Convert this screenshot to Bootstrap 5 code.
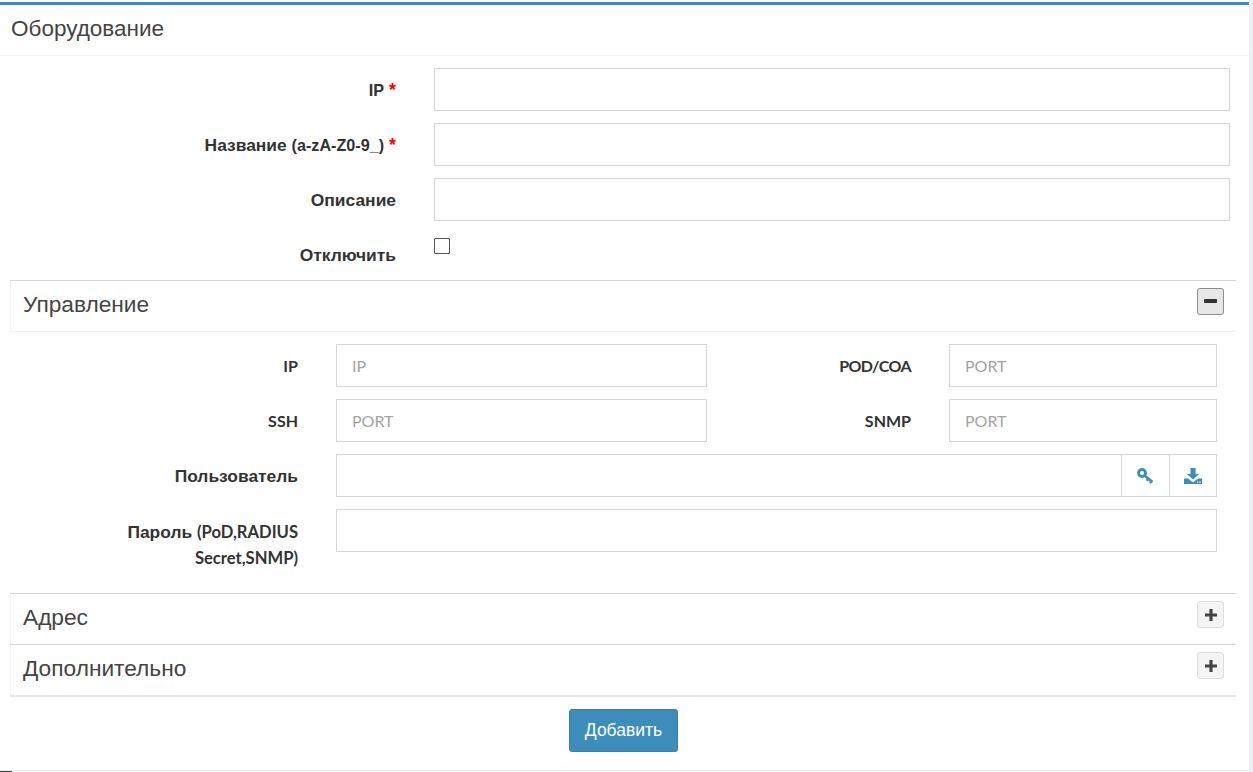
<!DOCTYPE html>
<html lang="ru"><head><meta charset="utf-8"><title>Оборудование</title>
<link href="https://cdn.jsdelivr.net/npm/bootstrap@5.3.0/dist/css/bootstrap.min.css" rel="stylesheet">
<style>
html,body{height:100%}
body{margin:0;background:#fff;font-family:"Liberation Sans",sans-serif;font-size:16px;color:#333;overflow:hidden}
.shell{width:1253px;height:772px;padding-top:2px;background:#fff;position:relative}
.pane{width:1249px;height:769px;background:#fff;border-top:3px solid #3c8dbc;border-bottom:1px solid #e4e6ea}
.strip{position:absolute;right:0;top:0;bottom:0;width:4px;background:#ecf0f5}
.foot-mark{position:absolute;left:0;bottom:0;width:12px;height:1px;background:#444}
.pane-head{height:51px;padding:0 11px;border-bottom:1px solid #f1f1f1;font:22.5px/47px "Liberation Sans",sans-serif;color:#444}
.pane-body{padding:12px 19px 0 11px}
.field{display:flex;margin-bottom:12px;min-height:43px}
.lab{flex:none;text-align:right;font-weight:700;font-size:17.4px;line-height:24px;padding-top:10px;color:#333;margin:0}
.lat{font-family:"Lato",sans-serif;font-size:16px}
.lat-big{font-family:"Lato",sans-serif;font-size:16.6px}
.lat-arial{font-size:16.2px}
.tight{letter-spacing:-.6px}
.outer-lab{width:385px;margin-right:38px}
.req{color:#f00;font-size:18px}
.inp{height:43px;border:1px solid #d2d6de;border-radius:0;font-family:"Lato",sans-serif;font-size:16px;padding:6px 15px;color:#555;box-shadow:none}
.inp::placeholder{color:#a3a3a3}
.chk{width:16px;height:16px;border:1px solid #555;border-radius:1px;margin:0;background:#fff;appearance:none;display:block}
.chk-wrap{padding-top:5px}
.sect{width:1226px;border-top:1px solid #d2d6de;margin-left:-1px}
.sect-head{height:50px;padding:0 12px 0 13px;font:22.7px/47px "Liberation Sans",sans-serif;color:#444;box-shadow:1px 0 0 #f4f4f4 inset}
.sect-open .sect-head{border-bottom:1px solid #f1f1f1;height:51px}
.tog{width:27px;height:27px;margin-top:7px;border:1px solid #ddd;border-radius:3px;background:#f4f4f4;padding:0;display:flex;align-items:center;justify-content:center}
.tog.on{background:#e7e7e7;border-color:#8c8c8c}
.sect-body{padding:12px 9px 22px 0}
.in-lab{width:288px;margin-right:38px}
.in-lab2{width:204px;margin-right:38px}
.half{width:371px;flex:none}
.half2{width:268px;flex:none}
.wide{width:881px;flex:none}
.inp-joined{border-right:0}
.addon{width:48px;flex:none;margin-left:0!important;border:1px solid #d2d6de;border-right:0;background:#fff;display:flex;align-items:center;justify-content:center}
.addon-end{border-right:1px solid #d2d6de}
.sect-last{border-bottom:2px solid #e4e6ea;height:53px}
.go{background:#3c8dbc;border:1px solid #367fa9;color:#fff;width:109px;height:43px;border-radius:3px;font:17.5px "Liberation Sans",sans-serif;padding:0}
.go-row{margin-top:12px;width:1225px}
.two-line{line-height:26px;padding-top:10px;padding-left:60px}
</style></head><body>
<div class="shell">
<div class="pane">
 <div class="pane-head">Оборудование</div>
 <form class="pane-body">
  <div class="field"><label class="lab outer-lab"><span class="lat-arial">IP</span> <span class="req">*</span></label><input class="form-control inp"></div>
  <div class="field"><label class="lab outer-lab">Название <span class="lat-arial">(a-zA-Z0-9_)</span> <span class="req">*</span></label><input class="form-control inp"></div>
  <div class="field"><label class="lab outer-lab">Описание</label><input class="form-control inp"></div>
  <div class="field mb-0"><label class="lab outer-lab">Отключить</label><div class="chk-wrap"><input type="checkbox" class="chk"></div></div>
  <div class="mb-1"></div>

  <div class="sect sect-open">
   <div class="sect-head d-flex justify-content-between"><span>Управление</span>
    <button type="button" class="tog on"><svg width="13" height="5" viewBox="0 0 13 5"><rect y="0" width="13" height="4" rx=".8" fill="#333"/></svg></button></div>
   <div class="sect-body">
    <div class="field"><label class="lab in-lab lat">IP</label><input class="form-control inp half" placeholder="IP"><label class="lab in-lab2 lat tight">POD/COA</label><input class="form-control inp half2" placeholder="PORT"></div>
    <div class="field"><label class="lab in-lab lat">SSH</label><input class="form-control inp half" placeholder="PORT"><label class="lab in-lab2 lat">SNMP</label><input class="form-control inp half2" placeholder="PORT"></div>
    <div class="field"><label class="lab in-lab">Пользователь</label><div class="input-group flex-nowrap wide"><input class="form-control inp inp-joined">
      <span class="addon"><svg width="17" height="16" viewBox="0 0 17 16" fill="none" stroke="#3c8dbc"><circle cx="5" cy="5" r="3.500" stroke-width="2.800"/><path d="M7.500 7.500l8 6.500M11.500 10.500l-1.800 2.300M14.600 13l-1.600 2" stroke-width="2.400"/></svg></span>
      <span class="addon addon-end"><svg width="18" height="16" viewBox="0 0 18 16" fill="#3c8dbc"><path d="M6.500 0h5v6h3.500L9 11.500 3 6h3.500z"/><path fill-rule="evenodd" d="M0 10.500h4l5 4 5-4h4V16H0zM13 13.500h1.300v1.200H13zM15.300 13.500h1.300v1.200h-1.300z"/></svg></span></div></div>
    <div class="field mb-0"><label class="lab in-lab two-line">Пароль <span class="lat-big">(PoD,RADIUS Secret,SNMP)</span></label><input class="form-control inp wide"></div>
   </div>
  </div>
  <div class="sect"><div class="sect-head d-flex justify-content-between"><span>Адрес</span><button type="button" class="tog"><svg width="12" height="12" viewBox="0 0 13 13"><path d="M4.800 0h3.400v4.800H13v3.400H8.200V13H4.800V8.200H0V4.800h4.800z" fill="#444"/></svg></button></div></div>
  <div class="sect sect-last"><div class="sect-head d-flex justify-content-between"><span>Дополнительно</span><button type="button" class="tog"><svg width="12" height="12" viewBox="0 0 13 13"><path d="M4.800 0h3.400v4.800H13v3.400H8.200V13H4.800V8.200H0V4.800h4.800z" fill="#444"/></svg></button></div></div>
  <div class="text-center go-row"><button type="button" class="btn go">Добавить</button></div>
 </form>
</div>
<div class="strip"></div><div class="foot-mark"></div>
</div>
</body></html>
